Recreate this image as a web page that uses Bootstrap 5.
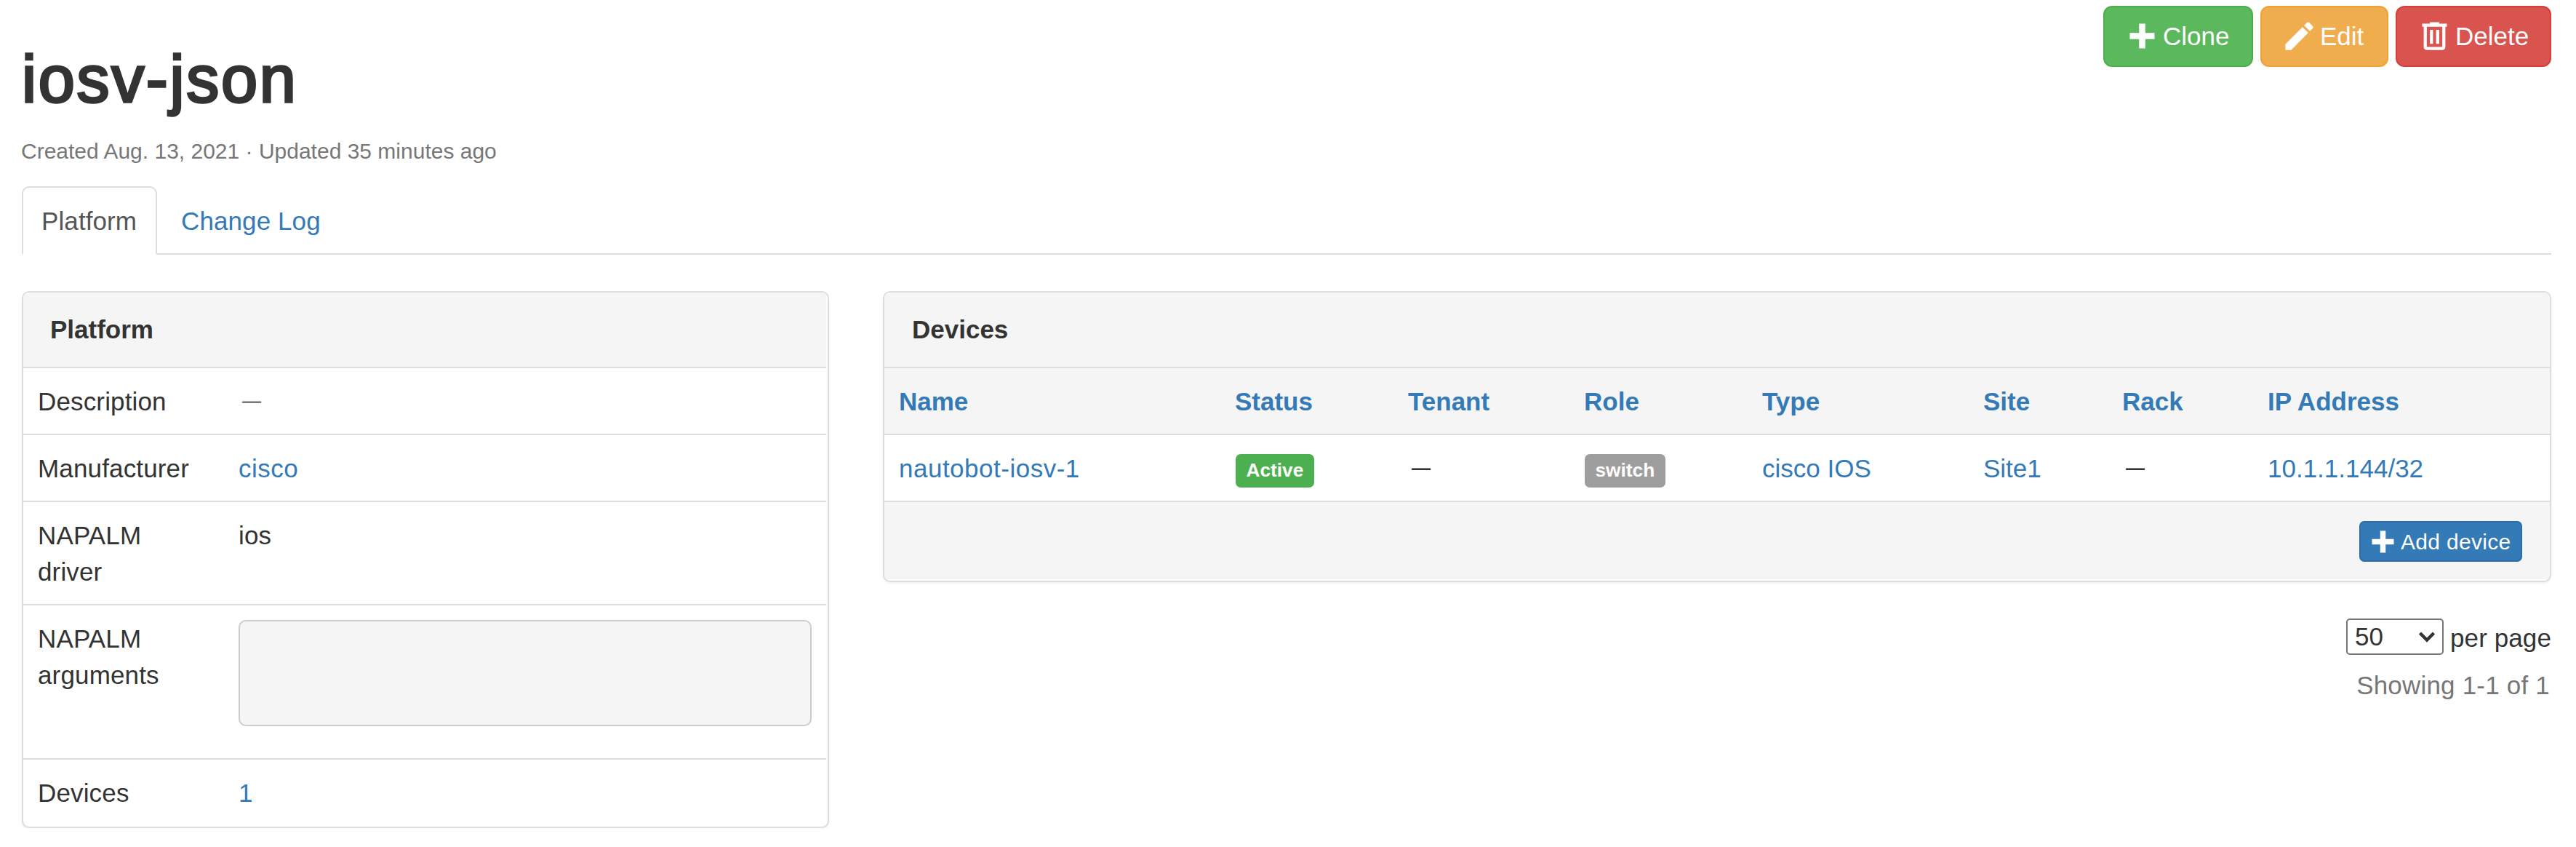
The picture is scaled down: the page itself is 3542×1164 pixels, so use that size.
<!DOCTYPE html>
<html lang="en">
<head>
<meta charset="utf-8">
<title>iosv-json</title>
<link href="https://cdn.jsdelivr.net/npm/bootstrap@5.3.0/dist/css/bootstrap.min.css" rel="stylesheet">
<style>
  body { font: 35px/50px "Liberation Sans", Arial, sans-serif; color: #333; background: #fff; }
  a { color: #337ab7; text-decoration: none; }
  .page-wrap { padding: 8px 34px 0 30px; }
  .page-title { font-size: 90px; line-height: 100px; font-weight: 400; -webkit-text-stroke: 3.4px #333; letter-spacing: 2.7px; margin: 51px 0 0; }
  .page-meta { font-size: 30px; line-height: 43px; color: #777; margin: 27px 0 0 -1px; }
  .actions { gap: 10px; }
  .actions .btn { height: 84px; border: 2px solid; border-radius: 12px; font-size: 35px; line-height: 50px; color: #fff; padding: 0 0 0 26px; gap: 3px; }
  .actions svg { width: 51px; height: 51px; fill: #fff; margin-top: -2px; }
  .btn-clone { width: 206px; background: #5cb85c; border-color: #4cae4c !important; }
  .btn-edit { width: 176px; background: #f0ad4e; border-color: #eea236 !important; }
  .btn-del { width: 214px; background: #d9534f; border-color: #d43f3a !important; }
  .nav-tabs { border-bottom: 2px solid #ddd; margin-top: 27px; }
  .nav-tabs .nav-link { height: 94px; margin-bottom: -2px; padding: 21px 0 0 25px; border: 2px solid transparent; border-radius: 10px 10px 0 0; color: #337ab7; line-height: 50px; letter-spacing: .1px; }
  .nav-tabs .nav-link.active { width: 186px; color: #555; border-color: #ddd #ddd #fff; }
  .nav-tabs .nav-item + .nav-item { margin-left: 6px; }
  .panels { gap: 74px; margin-top: 50px; }
  .side-col { width: 1110px; }
  .main-col { width: 2294px; }
  .panel-box { border: 2px solid #ddd; border-radius: 10px; box-shadow: 0 2px 3px rgba(0,0,0,.06); overflow: hidden; background: #fff; padding-bottom: 2px; }
  .side-col .panel-box { padding-right: 2px; }
  .side-col .table { letter-spacing: .15px; }
  .panel-head { background: #f5f5f5; height: 102px; padding: 26px 38px; font-weight: 700; }
  .side-col .panel-head { padding-left: 37px; }
  .panel-box .table { --bs-table-bg: transparent; table-layout: fixed; margin: 0; color: #333; border: 0; }
  .panel-box .table > :not(caption) > * > * { padding: 21px 20px 19px; border: 0; border-top: 2px solid #ddd; line-height: 50px; vertical-align: top; color: inherit; }
  .panel-box thead th { background: #f5f5f5; }
  .device-name { letter-spacing: .5px; }
  .args { height: 146px; margin: -1px 0 25px; background: #f5f5f5; border: 2px solid #ccc; border-radius: 10px; }
  .dash { display: block; font-size: 26px; line-height: 48px; padding-left: 5px; font-weight: 700; }
  .tag { display: block; width: fit-content; height: 46px; margin: 5px 0 -1px 1px; padding: 0 14.5px; border-radius: 7px; font-size: 26.25px; line-height: 44px; font-weight: 700; color: #fff; }
  .tag-active { background: #4caf50; }
  .tag-switch { background: #9e9e9e; }
  .panel-foot { background: #f5f5f5; border-top: 2px solid #ddd; height: 108px; padding: 26px 38px 0 0; }
  .btn-add { width: 224px; height: 56px; border: 2px solid #2e6da4 !important; border-radius: 7px; background: #337ab7; color: #fff; font-size: 30px; line-height: 45px; letter-spacing: .3px; padding: 0 0 0 8px; gap: 2px; }
  .btn-add svg { width: 45px; height: 45px; fill: #fff; }
  .pager { margin-top: 50px; gap: 9px; height: 50px; }
  .pager-label { padding-top: 3px; letter-spacing: .1px; }
  .pick { width: 134px; height: 50px; border: 2px solid #767676; border-radius: 5px; padding: 0 9px 0 10px; line-height: 46px; }
  .pick svg { width: 24px; height: 16px; }
  .showing { color: #777; margin: 17px 2px 0 0; line-height: 50px; letter-spacing: .2px; }
</style>
<script src="https://cdn.jsdelivr.net/npm/bootstrap@5.3.0/dist/js/bootstrap.bundle.min.js"></script>
</head>
<body>
<div class="page-wrap">
  <header class="d-flex justify-content-between align-items-start">
    <h1 class="page-title">iosv-json</h1>
    <div class="actions d-flex">
      <a class="btn btn-clone d-flex align-items-center" href="#"><svg viewBox="0 0 24 24"><path d="M20 14H14V20H10V14H4V10H10V4H14V10H20V14Z"/></svg>Clone</a>
      <a class="btn btn-edit d-flex align-items-center" href="#"><svg viewBox="0 0 24 24"><path d="M20.71,7.04C21.1,6.65 21.1,6 20.71,5.63L18.37,3.29C18,2.9 17.35,2.9 16.96,3.29L15.12,5.12L18.87,8.87M3,17.25V21H6.75L17.81,9.93L14.06,6.18L3,17.25Z"/></svg>Edit</a>
      <a class="btn btn-del d-flex align-items-center" href="#"><svg viewBox="0 0 24 24"><path d="M9,3V4H4V6H5V19A2,2 0 0,0 7,21H17A2,2 0 0,0 19,19V6H20V4H15V3H9M7,6H17V19H7V6M9,8V17H11V8H9M13,8V17H15V8H13Z"/></svg>Delete</a>
    </div>
  </header>
  <p class="page-meta">Created Aug. 13, 2021 · Updated 35 minutes ago</p>
  <ul class="nav nav-tabs">
    <li class="nav-item"><a class="nav-link active" href="#">Platform</a></li>
    <li class="nav-item"><a class="nav-link" href="#">Change Log</a></li>
  </ul>
  <main class="panels d-flex align-items-start">
    <section class="side-col flex-shrink-0">
      <div class="panel-box">
        <div class="panel-head">Platform</div>
        <table class="table">
          <colgroup><col style="width:276px"><col></colgroup>
          <tbody>
            <tr><td>Description</td><td><span class="dash" style="color:#777">—</span></td></tr>
            <tr><td>Manufacturer</td><td><a class="device-name" href="#">cisco</a></td></tr>
            <tr><td>NAPALM driver</td><td>ios</td></tr>
            <tr><td>NAPALM arguments</td><td><div class="args"></div></td></tr>
            <tr><td>Devices</td><td><a href="#">1</a></td></tr>
          </tbody>
        </table>
      </div>
    </section>
    <section class="main-col flex-shrink-0">
      <div class="panel-box">
        <div class="panel-head">Devices</div>
        <table class="table">
          <colgroup><col style="width:462px"><col style="width:238px"><col style="width:242px"><col style="width:245px"><col style="width:304px"><col style="width:191px"><col style="width:200px"><col></colgroup>
          <thead>
            <tr><th><a href="#">Name</a></th><th><a href="#">Status</a></th><th><a href="#">Tenant</a></th><th><a href="#">Role</a></th><th><a href="#">Type</a></th><th><a href="#">Site</a></th><th><a href="#">Rack</a></th><th><a href="#">IP Address</a></th></tr>
          </thead>
          <tbody>
            <tr><td><a class="device-name" href="#">nautobot-iosv-1</a></td><td><span class="tag tag-active">Active</span></td><td><span class="dash">—</span></td><td><span class="tag tag-switch">switch</span></td><td><a href="#">cisco IOS</a></td><td><a href="#">Site1</a></td><td><span class="dash">—</span></td><td><a href="#">10.1.1.144/32</a></td></tr>
          </tbody>
        </table>
        <div class="panel-foot d-flex justify-content-end align-items-start">
          <a class="btn btn-add d-flex align-items-center" href="#"><svg viewBox="0 0 24 24"><path d="M20 14H14V20H10V14H4V10H10V4H14V10H20V14Z"/></svg>Add device</a>
        </div>
      </div>
      <div class="pager d-flex justify-content-end align-items-center">
        <div class="pick d-flex justify-content-between align-items-center"><span>50</span><svg viewBox="0 0 24 16"><path d="M2.5 3 L12 12.5 L21.5 3" fill="none" stroke="#333" stroke-width="4.5"/></svg></div>
        <span class="pager-label">per page</span>
      </div>
      <div class="showing text-end">Showing 1-1 of 1</div>
    </section>
  </main>
</div>
</body>
</html>
